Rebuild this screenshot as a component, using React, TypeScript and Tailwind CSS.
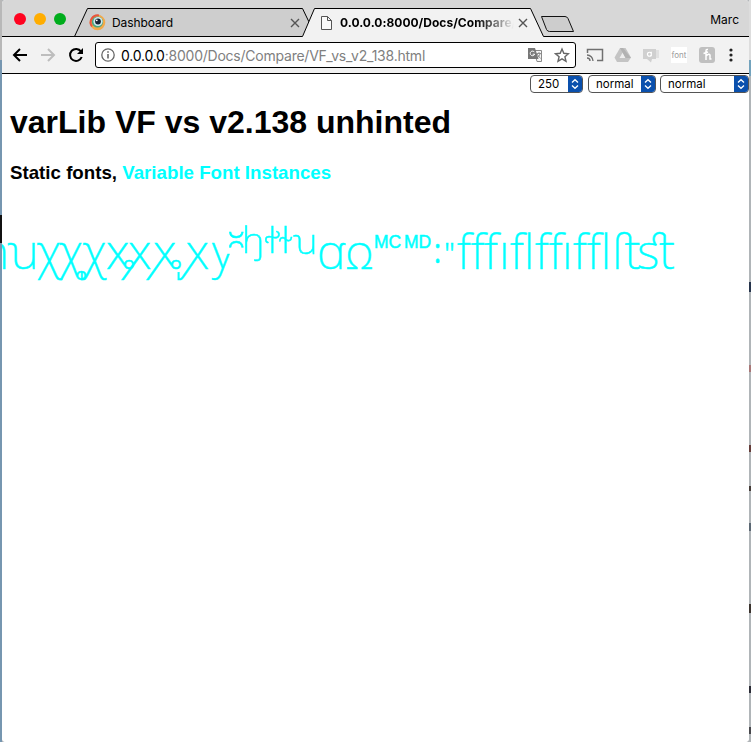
import React from "react";

// x is the pen position of each specimen glyph inside the line
const glyphs: { ch: string; x: number; cls?: string }[] = [
  { ch: "n", x: -21 },
  { ch: "ꭒ", x: 5 },
  { ch: "ꭓ", x: 34 },
  { ch: "ꭔ", x: 57 },
  { ch: "ꭕ", x: 79 },
  { ch: "ꭖ", x: 104 },
  { ch: "ꭗ", x: 126 },
  { ch: "ꭘ", x: 151 },
  { ch: "ꭙ", x: 181 },
  { ch: "ꭚ", x: 210 },
  { ch: "꭛", x: 219, cls: "text-[54px] translate-y-px" },
  { ch: "ꭜ", x: 240, cls: "text-[59px] translate-y-px" },
  { ch: "ꭝ", x: 263, cls: "text-[59px] translate-y-px" },
  { ch: "ꭞ", x: 279, cls: "text-[59px] translate-y-px" },
  { ch: "ꭟ", x: 291, cls: "text-[57px] translate-y-px" },
  { ch: "ꭤ", x: 315 },
  { ch: "ꭥ", x: 344 },
  { ch: "MC", x: 372, cls: "font-['Liberation_Sans',Arial,sans-serif] text-[17.5px] font-normal -translate-y-[21px]" },
  { ch: "MD", x: 402, cls: "font-['Liberation_Sans',Arial,sans-serif] text-[17.5px] font-normal -translate-y-[21px]" },
  { ch: "꞉", x: 430 },
  { ch: "\"", x: 442, cls: "text-[30px] -translate-y-[5px] font-light" },
  { ch: "ﬀ", x: 455 },
  { ch: "f", x: 482 },
  { ch: "ı", x: 497 },
  { ch: "ﬂ", x: 508 },
  { ch: "ﬀ", x: 533 },
  { ch: "ı", x: 560 },
  { ch: "ﬄ", x: 571 },
  { ch: "ﬅ", x: 610 },
  { ch: "ﬆ", x: 635 },
  { ch: "", x: 672 },
];

function Select({ label, cls }: { label: string; cls: string }) {
  return (
    <div className={`flex h-[18px] shrink-0 items-center overflow-hidden rounded-[4px] border border-[#555] bg-white ${cls}`}>
      <span className="flex-1 pl-[7px] text-[11.5px] leading-4 text-black">{label}</span>
      <span className="flex h-full w-[14px] items-center justify-center bg-[#0a50ad]">
        <svg width="8" height="12" viewBox="0 0 8 12" fill="none" stroke="white" strokeWidth="1.3">
          <path d="M1 4.500 4 1.700l3 2.800M1 7.500l3 2.800 3-2.800" />
        </svg>
      </span>
    </div>
  );
}

export default function App() {
  return (
    <div className="flex h-[742px] w-[751px] overflow-hidden bg-[#b3b7ba] font-['Inter','Noto_Sans',sans-serif]">
      <div className="flex w-[2px] shrink-0 flex-col">
        <div className="h-[60px] bg-[#b8b8b8]" />
        <div className="h-[155px] bg-[#7696b0]" />
        <div className="h-[28px] bg-[#111]" />
        <div className="flex-1 bg-[#7696b0]" />
      </div>
      <div className="flex h-[742px] w-[747px] shrink-0 flex-col overflow-hidden rounded-[4px] bg-white">
        <header className="relative h-[37px] shrink-0 bg-[#d7d7d7]">
          <svg className="absolute left-0 top-0" width="747" height="37" viewBox="2 0 747 37" fill="none">
            <path d="M74.5 36.500 87.500 8.500H302.500L309 22 302.500 36.500Z" fill="#cecece" />
            <path d="M0 36.500H74.500L87.500 8.500H302.500L309 22" stroke="#000" />
            <path d="M302 37 314.500 8.500H530.500L543.500 37Z" fill="#f2f2f2" />
            <path d="M74 36.500H302.500L314.500 8.500H530.500L543.500 36.500H751" stroke="#000" />
            <path d="M541.500 16.500H565Q567 16.500 568 18.500L573.500 31.500H549.500Q547.500 31.500 546.500 29.500Z" fill="#cdcdcd" stroke="#111" />
            <circle cx="20" cy="19" r="6" fill="#ff0320" />
            <circle cx="40" cy="19" r="6" fill="#ffad00" />
            <circle cx="60" cy="19" r="6" fill="#00ad1c" />
            <circle cx="97.500" cy="22.500" r="7.800" fill="#f2a94a" />
            <path d="M99 15.500a7 7 0 0 0-7 11" stroke="#e8553e" strokeWidth="2" />
            <circle cx="97.500" cy="22" r="5.600" fill="#49a681" />
            <circle cx="98" cy="21.500" r="4.600" fill="#cfe8ee" />
            <circle cx="98" cy="21.500" r="2.900" fill="#172535" />
            <circle cx="96.800" cy="20.300" r="0.900" fill="white" />
            <path d="M291 19l8 8m0-8-8 8" stroke="#555" strokeWidth="1.400" />
            <path d="M519 19l8 8m0-8-8 8" stroke="#555" strokeWidth="1.400" />
            <path d="M321.500 16.500H327.500L331.500 20.500V29.500H321.500ZM327.500 16.500V20.500H331.500" fill="#fafafa" stroke="#555" />
          </svg>
          <div className="relative flex h-full items-center pt-[8px] text-[12px] leading-[15px] text-black">
            <span className="ml-[110px] w-[228px] font-normal tracking-[-0.1px]">Dashboard</span>
            <span className="w-[174px] overflow-hidden whitespace-nowrap bg-linear-to-r from-black from-75% to-[#f2f2f2] bg-clip-text font-bold tracking-[0.02px] text-transparent">0.0.0.0:8000/Docs/Compare/</span>
            <span className="-mt-[6px] ml-auto mr-[10px]">Marc</span>
          </div>
        </header>

        <div className="flex h-[37px] shrink-0 items-center border-b border-black bg-[#f2f2f2]">
          <svg className="ml-[10px] shrink-0" width="83" height="36" viewBox="12 37 83 36" fill="none">
            <path d="M27 55H14M20 49l-6 6 6 6" stroke="#000" strokeWidth="2" />
            <path d="M41 55h13M48 49l6 6-6 6" stroke="#bdbdbd" strokeWidth="2" />
            <path d="M81 51.500A6 6 0 1 0 81.700 57" stroke="#000" strokeWidth="2" />
            <path d="M83 48v6h-6Z" fill="#000" />
          </svg>
          <div className="flex h-[26px] w-[481px] shrink-0 items-center rounded-[3px] border border-black bg-white">
            <svg className="ml-[5px]" width="14" height="14" viewBox="0 0 14 14" fill="none" stroke="#666" strokeWidth="1.300">
              <circle cx="7" cy="7" r="6.200" />
              <path d="M7 6v4.500M7 3.300v1.400" strokeWidth="1.600" />
            </svg>
            <span className="ml-[6px] flex-1 text-[14px] tracking-[-0.23px] text-[#808080]"><span className="text-black">0.0.0.0</span>:8000/Docs/Compare/VF_vs_v2_138.html</span>
            <svg className="mr-[5px]" width="42" height="16" viewBox="528 47 42 16" fill="none">
              <path d="M534 50.500H541.500V61.500H537Z" fill="#f5f5f5" stroke="#8a8a8a" />
              <path d="M528 48h7l3.500 11H528Z" fill="#777" />
              <path d="M534.500 52.200a2.300 2.300 0 1 0 .2 2h-2" stroke="white" />
              <path d="M536.500 53.500h4.500M539 52v1.500M540 54q-1 3-3 4M537 54l3.500 4.500" stroke="#777" strokeWidth=".8" />
              <path d="M562 49l1.800 4.300 4.700.4-3.600 3 1.100 4.600-4-2.500-4 2.500 1.100-4.600-3.600-3 4.700-.4Z" stroke="#666" strokeWidth="1.400" />
            </svg>
          </div>
          <svg className="ml-[10px] shrink-0" width="82" height="18" viewBox="586 46 82 18" fill="none">
            <path d="M587.500 53V49.500H602.500V60.500H597" stroke="#707070" strokeWidth="1.500" />
            <path d="M587 55a6 6 0 0 1 6 6M587 58a3 3 0 0 1 3 3" stroke="#707070" strokeWidth="1.400" />
            <path d="M620 48h5.500l5.500 9.500-3 4.500h-11l-2.500-4.500Z" fill="#c4c4c4" />
            <path d="M622.700 52.500 619.500 58h6.500Z" fill="#eee" />
            <path d="M623 48l8 10h-5.500L620 48Z" fill="#b2b2b2" />
            <path d="M655 50h4v8h-4Z" fill="#e1e1e1" />
            <path d="M643 49h13v10h-4l-1 3.500-4-3.500h-4Z" fill="#d0d0d0" />
            <path d="M651 53a2 2 0 1 0 0 2.500M651.300 51.800v4.500" stroke="white" strokeWidth="1.200" />
          </svg>
          <span className="ml-[3px] flex h-4 w-4 shrink-0 items-center justify-center bg-white text-[8px] text-[#999]">font</span>
          <svg className="ml-[12px] shrink-0" width="42" height="18" viewBox="699 46 42 18" fill="none">
            <rect x="699" y="47" width="16" height="16" rx="3" fill="#c0c0c0" />
            <path d="M706 60v-9q0-2 2-1.500M703.500 53.500 708 52M706 56q3-3 4-1v4h1.500" stroke="white" strokeWidth="1.500" />
            <circle cx="731" cy="50" r="1.600" fill="#222" />
            <circle cx="731" cy="55" r="1.600" fill="#222" />
            <circle cx="731" cy="60" r="1.600" fill="#222" />
          </svg>
        </div>

        <main className="flex min-h-0 flex-1 flex-col overflow-hidden bg-white">
          <div className="flex h-[19px] items-end justify-end">
            <Select label="250" cls="w-[53px]" />
            <Select label="normal" cls="ml-[5px] w-[68px]" />
            <Select label="normal" cls="ml-[4px] w-[89px]" />
          </div>
          <h1 className="ml-2 mt-[11px] whitespace-nowrap font-['Liberation_Sans',Arial,sans-serif] text-[32px] font-bold leading-[37px] text-black">varLib VF vs v2.138 unhinted</h1>
          <h3 className="ml-2 mt-[21px] whitespace-nowrap font-['Liberation_Sans',Arial,sans-serif] text-[18.72px] font-bold leading-[22px] text-black">
            Static fonts, <span className="text-[#00ffff]">Variable Font Instances</span>
          </h3>
          <div className="-ml-[21px] mt-[29px] flex h-[66px] items-baseline whitespace-nowrap font-['Noto_Sans','DejaVu_Sans',sans-serif] text-[48px] font-extralight leading-[66px] text-[#00ffff] [-webkit-text-stroke:0.5px_#00ffff]">
            {glyphs.slice(0, -1).map((g, i) => (
              <span key={i} className={`block shrink-0 ${g.cls ?? ""}`} style={{ width: glyphs[i + 1].x - g.x }}>{g.ch}</span>
            ))}
          </div>
        </main>
      </div>
      <div className="flex w-[2px] shrink-0 flex-col bg-[#b0b5b8]">
        <div className="h-[60px] bg-[#ddd]" />
        <div className="h-[16px] bg-[#73a3bd]" />
        <div className="h-[206px] bg-[#b0b5b8]" />
        <div className="h-[10px] bg-[#26344c]" />
        <div className="h-[73px]" />
        <div className="h-[7px] bg-[#a87777]" />
        <div className="h-[73px]" />
        <div className="h-[7px] bg-[#653c39]" />
        <div className="h-[34px]" />
        <div className="h-[5px] bg-[#443b37]" />
        <div className="h-[32px]" />
        <div className="h-[8px] bg-[#5b6773]" />
        <div className="h-[73px]" />
        <div className="h-[9px] bg-[#3b332e]" />
        <div className="h-[73px]" />
        <div className="h-[7px] bg-[#2b2c36]" />
        <div className="h-[34px]" />
        <div className="h-[7px] bg-[#47484c]" />
      </div>
    </div>
  );
}
